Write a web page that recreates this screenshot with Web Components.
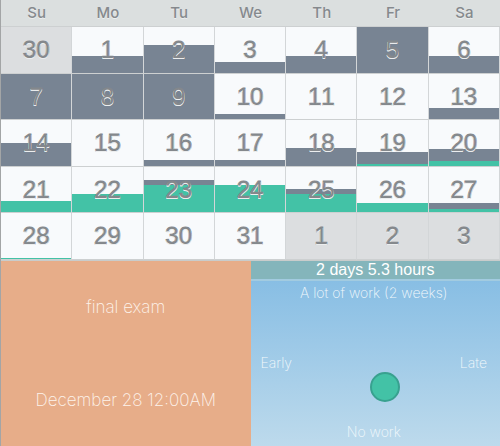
<!DOCTYPE html>
<html lang="en">
<head>
<meta charset="utf-8">
<meta name="viewport" content="width=device-width, initial-scale=1">
<title>Work planner</title>
<style>
  html { background: #bddaec; }
  body { margin: 0; font-family: "Liberation Sans", Arial, sans-serif; }
</style>
</head>
<body>
<work-planner>
  <month-calendar slot="calendar"></month-calendar>
  <event-card slot="event">
    <span slot="title">final exam</span>
    <time slot="when" datetime="12-28T00:00">December 28 12:00AM</time>
  </event-card>
  <effort-pad slot="effort">
    <span slot="total">2 days 5.3 hours</span>
    <span slot="top">A lot of work (2 weeks)</span>
    <span slot="left">Early</span>
    <span slot="right">Late</span>
    <span slot="bottom">No work</span>
  </effort-pad>
</work-planner>

<script>
  const define = (name, html, setup) => {
    const template = document.createElement('template');
    template.innerHTML = html;
    customElements.define(name, class extends HTMLElement {
      constructor() {
        super();
        this.attachShadow({ mode: 'open' }).append(template.content.cloneNode(true));
      }
      connectedCallback() { if (setup) setup(this, this.shadowRoot); }
    });
  };

  define('work-planner', `
    <style>
      :host { display: flex; flex-direction: column; min-height: 100vh; box-sizing: border-box; border-left: 1px solid #a3a5a6; }
      .panels { flex: 1; display: grid; grid-template-columns: 1fr 1fr; border-top: 1px solid #c9cccb; }
      ::slotted(*) { min-width: 0; }
    </style>
    <slot name="calendar"></slot>
    <div class="panels"><slot name="event"></slot><slot name="effort"></slot></div>
  `);

  /* busy = height of the whole bar, done = height of its green part */
  define('day-cell', `
    <style>
      :host { display: grid; background: #f8fafc; color: #84888c; }
      :host([outside]) { background: #dcdee0; }
      .bars, .number { grid-area: 1 / 1; }
      .bars { align-self: end; display: flex; flex-direction: column; justify-content: flex-end; background: #788493; }
      .done { background: #43c2a6; }
      .number { place-self: center; font-size: 24px; line-height: 28px; font-kerning: none;
        -webkit-text-stroke: 1px currentColor; paint-order: stroke fill; text-shadow: 0 1px 0 #eceeef, 0 1px 0 #eceeef; }
    </style>
    <div class="bars"><div class="done"></div></div>
    <span class="number"><slot></slot></span>
  `, (host, root) => {
    const px = name => (Number(host.getAttribute(name)) || 0) + 'px';
    const bars = root.querySelector('.bars');
    bars.style.height = host.getAttribute('busy') === 'full' ? '100%' : px('busy');
    root.querySelector('.done').style.height = px('done');
  });

  const weeks = [
    [[30, 0, 0, 1], [1, 17], [2, 28], [3, 11], [4, 17], [5, 'full'], [6, 17]],
    [[7, 'full'], [8, 'full'], [9, 'full'], [10, 5], [11], [12], [13, 11]],
    [[14, 23], [15], [16, 6], [17, 6], [18, 18], [19, 14, 2], [20, 17, 5]],
    [[21, 11, 11], [22, 18, 18], [23, 32, 27], [24, 27, 27], [25, 23, 18], [26, 9, 9], [27, 9, 3]],
    [[28, 1, 1], [29], [30], [31], [1, 0, 0, 1], [2, 0, 0, 1], [3, 0, 0, 1]]
  ];

  define('month-calendar', `
    <style>
      :host { display: block; background: #dbdfdf; }
      table { width: 100%; table-layout: fixed; border-collapse: separate; border-spacing: 0; }
      th, td { padding: 0; border-bottom: 1px solid #cdd0d1; }
      th { height: 26px; font: 500 15px/26px Inter, "Liberation Sans", sans-serif; color: #85898d; text-shadow: 0 1px 0 #eceeee; }
      td { border-right: 1px solid #d3d6d8; }
      day-cell { height: 46px; }
      tr:nth-child(even) day-cell { height: 45px; }
    </style>
    <table>
      <thead><tr></tr></thead>
      <tbody></tbody>
    </table>
  `, (host, root) => {
    root.querySelector('thead tr').innerHTML =
      ['Su', 'Mo', 'Tu', 'We', 'Th', 'Fr', 'Sa'].map(d => `<th scope="col">${d}</th>`).join('');
    root.querySelector('tbody').innerHTML = weeks.map(week => '<tr>' + week.map(
      ([day, busy = 0, done = 0, outside]) =>
        `<td><day-cell busy="${busy}" done="${done}"${outside ? ' outside' : ''}>${day}</day-cell></td>`
    ).join('') + '</tr>').join('');
  });

  define('event-card', `
    <style>
      :host { display: flex; flex-direction: column; align-items: center; justify-content: space-between;
        box-sizing: border-box; padding: 34px 8px; background: #e7ad89; color: #fdf3ec;
        font: 200 17px/24px Inter, "Liberation Sans", sans-serif; text-align: center; }
    </style>
    <slot name="title"></slot>
    <slot name="when"></slot>
  `);

  define('effort-pad', `
    <style>
      :host { display: flex; flex-direction: column; }
      .total { background: #84b5bb; color: #fff; border-bottom: 2px solid #a2cbe0; text-align: center; font-size: 16px; line-height: 18px; }
      .pad { position: relative; flex: 1; display: flex; flex-direction: column; justify-content: space-between;
        box-sizing: border-box; padding: 2px 13px 4px 10px; text-align: center; color: #f3f9fc;
        background: linear-gradient(#88bee4, #bddaec); font: 200 14px/20px Inter, "Liberation Sans", sans-serif; }
      .sides { display: flex; justify-content: space-between; }
      button { position: absolute; left: 54%; top: 64%; translate: -50% -50%; width: 30px; height: 30px; padding: 0;
        border: 2px solid #38a18f; border-radius: 50%; background: #43c2a6; }
    </style>
    <div class="total"><slot name="total"></slot></div>
    <div class="pad">
      <div><slot name="top"></slot></div>
      <div class="sides"><slot name="left"></slot><slot name="right"></slot></div>
      <div><slot name="bottom"></slot></div>
      <button type="button" aria-label="Effort and timing"></button>
    </div>
  `);
</script>
</body>
</html>
